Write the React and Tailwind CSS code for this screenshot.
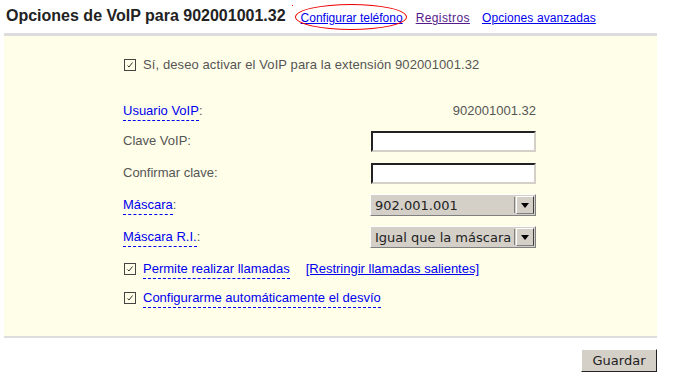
import React from 'react';

const font = { fontFamily: '"Liberation Sans", Arial, sans-serif' };

const Check = () => (
  <span className="inline-flex w-[12px] h-[12px] border border-[#444] bg-transparent items-center justify-center shrink-0">
    <svg width="10" height="10" viewBox="0 0 10 10">
      <path d="M2.5 5.5 L4 7 L7.5 2.5" stroke="#333" strokeWidth="1" fill="none" />
    </svg>
  </span>
);

const HelpLabel = ({ children, colon = true }) => (
  <span>
    <span className="text-[#0000ee] border-b border-dashed border-[#0000ee] pb-[2px]">{children}</span>
    {colon && <span className="text-[#555]">:</span>}
  </span>
);

const TextInput = () => (
  <input
    type="password"
    className="w-[165px] h-[21px] bg-white border-2 border-t-[#222] border-l-[#222] border-b-[#d4d0c8] border-r-[#d4d0c8] outline-none"
  />
);

const Select = ({ value }) => (
  <div className="w-[166px] h-[22px] bg-[#d4d0c8] flex items-center border border-[#aaa] border-t-white border-l-white border-b-[#808080] border-r-[#808080]">
    <span className="flex-1 pl-[4px] text-[13px] text-[#222] leading-none" style={{ fontFamily: '"DejaVu Sans", sans-serif' }}>{value}</span>
    <span className="w-px h-[16px] bg-[#808080] mr-px" />
    <span className="w-[18px] h-[18px] flex items-center justify-center border border-t-white border-l-white border-b-[#808080] border-r-[#404040] mr-px">
      <svg width="8" height="5" viewBox="0 0 8 5"><path d="M0 0 H8 L4 5 Z" fill="#000" /></svg>
    </span>
  </div>
);

export default function App() {
  return (
    <div className="w-[697px] h-[380px] bg-white relative" style={font}>
      {/* Header */}
      <div className="flex items-end h-[33px] pl-[6px] pb-[9px]">
        <h1 className="text-[16px] font-bold text-[#222] leading-none">Opciones de VoIP para 902001001.32</h1>
        <nav className="flex ml-[15px] text-[12px] leading-none">
          <a href="#" className="relative text-[#0000ee] underline">
            Configurar teléfono
            <span className="absolute left-[-6px] right-[-4px] top-[-8px] bottom-[-6px] border border-[#e00] rounded-[50%]" />
            <span className="absolute left-[-9px] top-[-7px] w-px h-px bg-[#e00]" />
          </a>
          <a href="#" className="ml-[13px] text-[#551a8b] underline tracking-[0.4px]">Registros</a>
          <a href="#" className="ml-[12px] text-[#0000ee] underline tracking-[0.1px]">Opciones avanzadas</a>
        </nav>
      </div>

      {/* Panel */}
      <div className="ml-[4px] w-[653px] h-[305px] bg-[#fffee8] border-t-[3px] border-b-[2px] border-[#dddddd] pl-[119px] pt-[21px] text-[13px] text-[#555]">
        <div className="flex items-center gap-[7px] pl-[1px] h-[16px] tracking-[0.1px]">
          <Check />
          <span>Sí, deseo activar el VoIP para la extensión 902001001.32</span>
        </div>

        <div className="w-[413px] mt-[29px] flex flex-col">
          <div className="flex items-center justify-between h-[18px]">
            <HelpLabel>Usuario VoIP</HelpLabel>
            <span>902001001.32</span>
          </div>
          <div className="flex items-center justify-between h-[22px] mt-[10px]">
            <span>Clave VoIP:</span>
            <TextInput />
          </div>
          <div className="flex items-center justify-between h-[22px] mt-[10px]">
            <span>Confirmar clave:</span>
            <TextInput />
          </div>
          <div className="flex items-center justify-between h-[22px] mt-[10px]">
            <HelpLabel>Máscara</HelpLabel>
            <Select value="902.001.001" />
          </div>
          <div className="flex items-center justify-between h-[22px] mt-[10px]">
            <HelpLabel>Máscara R.I.</HelpLabel>
            <Select value="Igual que la máscara" />
          </div>
          <div className="flex items-center gap-[7px] pl-[1px] h-[18px] mt-[12px]">
            <Check />
            <HelpLabel colon={false}>Permite realizar llamadas</HelpLabel>
            <a href="#" className="ml-[9px] text-[#0000ee] underline">[Restringir llamadas salientes]</a>
          </div>
          <div className="flex items-center gap-[7px] pl-[1px] h-[18px] mt-[11px]">
            <Check />
            <HelpLabel colon={false}>Configurarme automáticamente el desvío</HelpLabel>
          </div>
        </div>
      </div>

      <div className="w-[657px] flex justify-end mt-[11px]">
        <button
          className="w-[76px] h-[23px] bg-[#d4d0c8] text-[13px] text-[#222] border border-t-white border-l-white border-b-[#222] border-r-[#222]"
          style={{ fontFamily: '"DejaVu Sans", sans-serif' }}
        >
          Guardar
        </button>
      </div>
    </div>
  );
}
